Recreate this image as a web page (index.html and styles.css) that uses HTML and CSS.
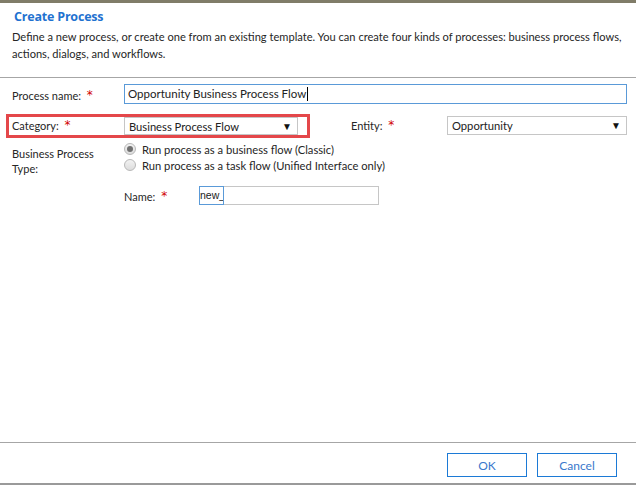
FILE: index.html
```html
<!DOCTYPE html>
<html>
<head>
<meta charset="utf-8">
<link rel="stylesheet" href="styles.css">
</head>
<body>
<div class="dialog">
  <div class="topbar"></div>
  <div class="header">
    <h1 class="title">Create Process</h1>
    <p class="desc">Define a new process, or create one from an existing template. You can create four kinds of processes: business process flows,<br>actions, dialogs, and workflows.</p>
  </div>
  <div class="body">
    <div class="row row-name">
      <label class="lbl">Process name: <span class="req">*</span></label>
      <div class="input input-focus">Opportunity Business Process Flow<span class="caret"></span></div>
    </div>
    <div class="row row-cat">
      <div class="highlight">
        <label class="lbl">Category: <span class="req">*</span></label>
        <div class="select select-cat"><span>Business Process Flow</span><span class="arrow">▼</span></div>
      </div>
      <label class="lbl lbl-entity">Entity: <span class="req">*</span></label>
      <div class="select select-entity"><span>Opportunity</span><span class="arrow">▼</span></div>
    </div>
    <div class="row row-type">
      <label class="lbl lbl-type">Business Process Type:</label>
      <div class="radios">
        <div class="radio-row"><span class="radio checked"></span>Run process as a business flow (Classic)</div>
        <div class="radio-row"><span class="radio"></span>Run process as a task flow (Unified Interface only)</div>
      </div>
    </div>
    <div class="row row-uname">
      <label class="lbl lbl-uname">Name: <span class="req">*</span></label>
      <div class="uname"><span class="prefix">new_</span><span class="uname-field"></span></div>
    </div>
  </div>
  <div class="footer">
    <button class="btn">OK</button>
    <button class="btn">Cancel</button>
  </div>
  <div class="bottombar"></div>
</div>
</body>
</html>
```
FILE: styles.css
```css
html, body {
  margin: 0;
  padding: 0;
  background: #ffffff;
}
body {
  font-family: "Lato", "Liberation Sans", sans-serif;
  font-size: 11px;
  color: #222222;
}
.dialog {
  width: 636px;
  height: 485px;
  display: flex;
  flex-direction: column;
  background: #ffffff;
}
.topbar {
  height: 3px;
  background: #807c68;
  flex: none;
}
.header {
  padding: 6px 10px 0 12px;
  height: 68px;
  border-bottom: 1px solid #a6a6a6;
  flex: none;
  box-sizing: content-box;
}
.title {
  margin: 0 0 0 2px;
  font-family: "Open Sans", "Liberation Sans", sans-serif;
  font-size: 12.5px;
  font-weight: 700;
  color: #1f72d0;
  line-height: 16px;
  letter-spacing: -0.2px;
}
.desc {
  margin: 3px 0 0 0;
  font-size: 11.1px;
  line-height: 17px;
  color: #262626;
}
.body {
  flex: 1;
  padding-top: 6px;
  border-bottom: 1px solid #a6a6a6;
}
.row {
  display: flex;
  align-items: center;
}
.lbl {
  color: #262626;
  white-space: nowrap;
  font-size: 11px;
}
.req {
  color: #d10000;
  font-family: "DejaVu Sans", sans-serif;
  font-size: 12px;
  margin-left: 3px;
  position: relative;
  top: -1px;
}
.row-name {
  height: 20px;
}
.row-name .lbl {
  width: 112px;
  padding-left: 12px;
  margin-top: 3px;
}
.input {
  box-sizing: border-box;
  height: 20px;
  width: 503px;
  border: 1px solid #aaaaaa;
  padding: 0 3px;
  line-height: 18px;
  display: flex;
  align-items: center;
  font-size: 11.5px;
}
.input-focus {
  border-color: #5a9ad8;
}
.caret {
  display: inline-block;
  width: 1px;
  height: 14px;
  background: #000;
  margin-left: 1px;
}
.row-cat {
  margin-top: 10px;
  height: 24px;
}
.highlight {
  box-sizing: border-box;
  margin-left: 6px;
  width: 304px;
  height: 24px;
  border: 3px solid #e4474a;
  display: flex;
  align-items: center;
}
.highlight .lbl {
  width: 112px;
  padding-left: 3px;
}
.select {
  box-sizing: border-box;
  height: 20px;
  border: 1px solid #c6c6c6;
  display: flex;
  align-items: center;
  justify-content: space-between;
  padding: 0 5px 0 4px;
  font-size: 11.2px;
  color: #222;
}
.select-cat {
  width: 174px;
  height: 18px;
}
.arrow {
  font-size: 10px;
  color: #111;
}
.lbl-entity {
  margin-left: 41px;
  width: 96px;
}
.select-entity {
  width: 180px;
  height: 19px;
  margin-top: -2px;
}
.row-type {
  align-items: flex-start;
  margin-top: 3px;
}
.lbl-type {
  padding-left: 12px;
  width: 100px;
  white-space: normal;
  line-height: 15px;
  margin-top: 5px;
  flex: none;
}
.radios {
  margin-left: 12px;
  display: flex;
  flex-direction: column;
}
.radio-row {
  display: flex;
  align-items: center;
  height: 16px;
  font-size: 11.2px;
  color: #262626;
}
.radio {
  box-sizing: border-box;
  width: 12px;
  height: 12px;
  border-radius: 50%;
  border: 1px solid #b8b8b8;
  background: linear-gradient(#f2f2f2, #dcdcdc);
  margin-right: 6px;
  position: relative;
}
.radio.checked::after {
  content: "";
  position: absolute;
  left: 2px;
  top: 2px;
  width: 6px;
  height: 6px;
  border-radius: 50%;
  background: #707070;
}
.row-uname {
  margin-top: 10px;
  height: 19px;
}
.lbl-uname {
  margin-left: 124px;
  width: 75px;
  margin-top: 2px;
}
.uname {
  display: flex;
  height: 19px;
}
.prefix {
  box-sizing: border-box;
  height: 19px;
  width: 25px;
  border: 1px solid #5a9ad8;
  display: flex;
  align-items: center;
  font-family: "Liberation Sans", sans-serif;
  font-size: 10.5px;
  line-height: 17px;
  overflow: hidden;
}
.uname-field {
  box-sizing: border-box;
  height: 19px;
  width: 155px;
  border: 1px solid #c6c6c6;
  border-left: none;
}
.footer {
  height: 40px;
  display: flex;
  justify-content: flex-end;
  align-items: flex-start;
  gap: 10px;
  padding: 10px 19px 0 0;
  box-sizing: border-box;
  flex: none;
}
.btn {
  width: 80px;
  height: 24px;
  border: 1px solid #1c7ad6;
  background: #ffffff;
  color: #3a78cc;
  font-family: "Lato", "Liberation Sans", sans-serif;
  font-size: 12px;
  padding: 0;
  margin: 0;
}
.bottombar {
  height: 2px;
  background: #9a9a9a;
  flex: none;
}
```
